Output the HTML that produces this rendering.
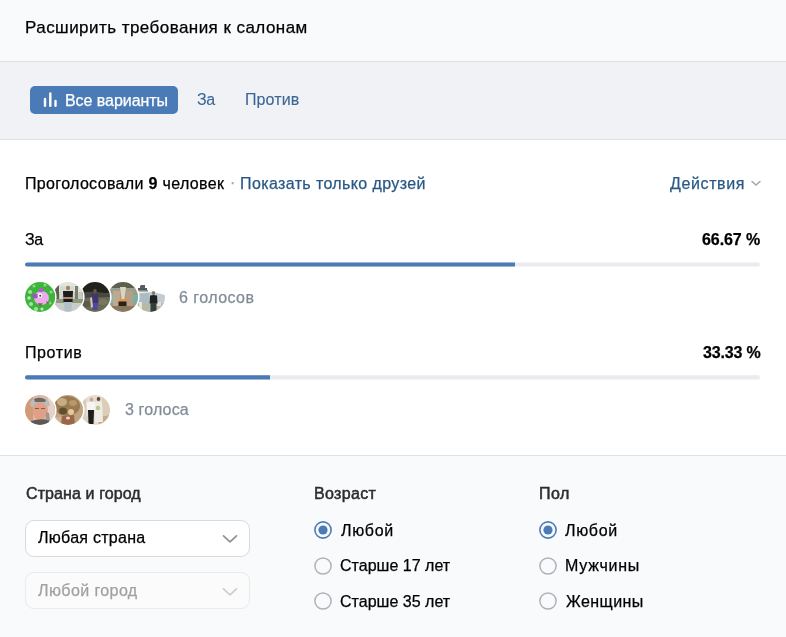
<!DOCTYPE html>
<html><head><meta charset="utf-8">
<style>
*{margin:0;padding:0;box-sizing:border-box}
html,body{width:786px;height:637px;overflow:hidden;background:#fff;font-family:"Liberation Sans",sans-serif;color:#000}
.t{position:absolute;white-space:nowrap;font-size:16px;line-height:20px;will-change:transform;-webkit-text-stroke:0.25px currentColor}
#hdr{position:absolute;left:0;top:0;width:786px;height:62px;background:#f9fafb;border-bottom:1px solid #dcdfe3}
#tabs{position:absolute;left:0;top:62px;width:786px;height:78px;background:#f0f2f5;border-bottom:1px solid #dde0e4}
#filt{position:absolute;left:0;top:455px;width:786px;height:182px;background:#f9fafb;border-top:1px solid #dfe1e5}
.btn{position:absolute;left:30px;top:86px;width:148px;height:28px;background:#4a7bb6;border-radius:5px}
.link{color:#2a5885}
.tab{color:#3a6595;-webkit-text-stroke:0.1px #3a6595}
.gray{color:#818c99}
.med{color:#2c2d2e;-webkit-text-stroke:0.5px #2c2d2e}
.track{position:absolute;left:25px;width:735px;height:4px;background:#e9ebee;border-radius:2px;overflow:hidden}
.fill{position:absolute;left:0;top:0;height:100%;background:#4a7bb6}
.av{position:absolute;width:30px;height:30px;border-radius:50%;box-shadow:0 0 0 1.6px #fff;overflow:hidden}
.av svg{display:block}
.sel{position:absolute;left:25px;width:225px;height:37px;border-radius:9px;background:#fff;border:1px solid #d8dadd}
.sel.dis{background:#fbfbfc;border-color:#e9eaec}
.chev{position:absolute}
.rad{position:absolute;width:18px;height:18px}
.rad svg{display:block}
.radio{position:absolute;width:18px;height:18px;border-radius:50%;border:1.6px solid #adb3ba;background:transparent}
.radio.on{border:1.7px solid #4f7db5}
.radio.on::after{content:"";position:absolute;left:2.8px;top:2.8px;width:9px;height:9px;border-radius:50%;background:#4a7bb6}
</style></head><body>
<div id="hdr"></div>
<div class="t" style="left:25px;top:17.7px;font-size:17px;letter-spacing:0.45px">Расширить требования к салонам</div>

<div id="tabs"></div>
<div class="btn"></div>
<svg style="position:absolute;left:43px;top:92px" width="15" height="16" viewBox="0 0 15 16">
  <rect x="0.8" y="5.8" width="2.4" height="9.2" rx="1.2" fill="#fff"/>
  <rect x="6.1" y="0.2" width="2.4" height="14.8" rx="1.2" fill="#fff"/>
  <rect x="11.3" y="7.7" width="2.4" height="7.3" rx="1.2" fill="#fff"/>
</svg>
<div class="t" style="left:65px;top:90.7px;color:#fff;letter-spacing:-0.05px">Все варианты</div>
<div class="t tab" style="left:197.2px;top:90.2px;letter-spacing:-0.5px">За</div>
<div class="t tab" style="left:245px;top:90.2px;letter-spacing:0.1px">Против</div>

<div class="t" style="left:25.2px;top:173.7px;letter-spacing:0.34px">Проголосовали <b>9</b> человек</div>
<div class="t gray" style="left:229.8px;top:172.8px;color:#a0a8b2">·</div>
<div class="t link" style="left:240px;top:173.7px;letter-spacing:0.38px">Показать только друзей</div>
<div class="t link" style="left:670px;top:173.7px;letter-spacing:0.62px">Действия</div>
<svg class="chev" style="left:750.5px;top:180px" width="10" height="7" viewBox="0 0 10 7"><path d="M1 1.5 L5 5 L9 1.5" fill="none" stroke="#99a2ad" stroke-width="1.4" stroke-linecap="round" stroke-linejoin="round"/></svg>

<div class="t" style="left:25.3px;top:230.2px;letter-spacing:-0.3px">За</div>
<div class="t" style="left:702px;top:230.0px;font-weight:bold;letter-spacing:-0.07px">66.67 %</div>
<svg style="position:absolute;left:0;top:250px" width="786" height="30"><rect x="25" y="12.4" width="735" height="4.2" rx="2.1" fill="#e9ebee"/><path d="M27.1 12.4 H515 V16.6 H27.1 A2.1 2.1 0 0 1 27.1 12.4 Z" fill="#4a7bb6"/></svg>

<svg width="0" height="0" style="position:absolute"><defs>
<filter id="bl" x="-10%" y="-10%" width="120%" height="120%"><feGaussianBlur stdDeviation="0.65"/></filter>
<filter id="bl2" x="-10%" y="-10%" width="120%" height="120%"><feGaussianBlur stdDeviation="1.2"/></filter>
</defs></svg>
<!-- row 1 -->
<div class="av" style="left:135px;top:282px;z-index:1;background:#fff"><svg width="30" height="30" viewBox="0 0 30 30"><g filter="url(#bl)">
<rect width="30" height="30" fill="#ffffff"/>
<path d="M0 11 L18 10 L30 13 L30 24 L0 24Z" fill="#c3ccd0"/>
<path d="M0 12 L14 11 L14 22 L0 22Z" fill="#aebbc2"/>
<rect x="5" y="3" width="5" height="3" fill="#55605f"/>
<rect x="3" y="6" width="9" height="2" fill="#4e5a58"/>
<rect x="2" y="8" width="11" height="1.6" fill="#7d8a88"/>
<path d="M0 22 L30 21 L28 30 L0 30Z" fill="#b8b8a6"/>
<rect x="4" y="20" width="3" height="8" fill="#e8e6da"/>
<rect x="20" y="20" width="6" height="4" fill="#e2e0d2"/>
<ellipse cx="18.5" cy="11" rx="1.7" ry="2" fill="#8c7868"/>
<path d="M15 13.5 Q18.5 12.5 22 13.5 L22.5 21.5 L14.5 21.5Z" fill="#1c2326"/>
<rect x="15.5" y="21" width="6" height="9" fill="#333c40"/>
</g></svg></div>
<div class="av" style="left:107.5px;top:282px;z-index:2"><svg width="30" height="30" viewBox="0 0 30 30"><g filter="url(#bl)">
<rect width="30" height="30" fill="#a89680"/>
<rect x="0" y="0" width="30" height="7" fill="#5d6150"/>
<path d="M2 6 L28 6 L26 10 L4 10Z" fill="#9aa08e"/>
<path d="M0 12 L7 12 L7 21 L0 21Z" fill="#7cb8b6"/>
<path d="M23 13 L30 13 L30 21 L23 21Z" fill="#6fb2ac"/>
<path d="M5 9 L12 9 L12 24 L5 24Z" fill="#bfa98e"/>
<path d="M18 9 L25 9 L25 24 L18 24Z" fill="#b59e84"/>
<path d="M12 5 L18 5 L16.5 17 L13.5 17Z" fill="#ddd4c0"/>
<rect x="11" y="17" width="7" height="2.5" fill="#e8924a"/>
<rect x="10.5" y="19.5" width="8" height="5" fill="#2c2014"/>
<rect x="0" y="24" width="30" height="6" fill="#8a7760"/>
</g></svg></div>
<div class="av" style="left:80px;top:282px;z-index:3"><svg width="30" height="30" viewBox="0 0 30 30"><g filter="url(#bl)">
<rect width="30" height="30" fill="#5a5a4c"/>
<rect x="0" y="0" width="30" height="11" fill="#22231f"/>
<path d="M0 11 Q12 8 30 12 L30 16 L0 16Z" fill="#474840"/>
<path d="M0 16 L30 15 L30 30 L0 30Z" fill="#6b6a58"/>
<ellipse cx="7" cy="22" rx="5" ry="3" fill="#5b5a4a"/>
<ellipse cx="23" cy="20" rx="5" ry="3" fill="#7a7864"/>
<ellipse cx="15" cy="9" rx="1.8" ry="2.1" fill="#6a584a"/>
<path d="M11.5 12 L18 12 L18.5 21 L11 21Z" fill="#3f3470"/>
<path d="M12 21 L18 21 L17.5 28 L12.5 28Z" fill="#4e4a9a"/>
<path d="M10 16 L12 15 L13 25 L11 26Z" fill="#d4c3b4"/>
</g></svg></div>
<div class="av" style="left:52.5px;top:282px;z-index:4"><svg width="30" height="30" viewBox="0 0 30 30"><g filter="url(#bl)">
<rect width="30" height="30" fill="#c4cbc0"/>
<rect x="0" y="0" width="30" height="10" fill="#e2e4de"/>
<rect x="7" y="4" width="14" height="14" fill="#d6dad2"/>
<rect x="1" y="2" width="5" height="19" fill="#59634a"/>
<rect x="22" y="4" width="3" height="16" fill="#7a8070"/>
<rect x="0" y="17" width="30" height="5" fill="#8f9a7c"/>
<rect x="0" y="21" width="30" height="9" fill="#c9ccc8"/>
<ellipse cx="15" cy="6" rx="2" ry="2.3" fill="#a27e64"/>
<path d="M10 9 L20 9 L19.5 20 L10.5 20Z" fill="#1b1b1c"/>
<path d="M9.5 15 L20.5 15 L20 17 L10 17Z" fill="#b08a70"/>
<path d="M11 20 L19 20 L18.5 30 L11.5 30Z" fill="#b4c0c8"/>
</g></svg></div>
<div class="av" style="left:25px;top:282px;z-index:5"><svg width="30" height="30" viewBox="0 0 30 30"><g filter="url(#bl)">
<rect width="30" height="30" fill="#3db53b"/>
<circle cx="5" cy="10" r="2" fill="#a6e0a0"/><circle cx="4" cy="16" r="1.8" fill="#b8e8c0"/><circle cx="6" cy="22" r="2" fill="#a6e0a0"/>
<circle cx="11" cy="27" r="2" fill="#a6e0a0"/><circle cx="17" cy="27" r="1.6" fill="#b8e8c0"/><circle cx="9" cy="4" r="1.5" fill="#8fd88a"/>
<circle cx="20" cy="3" r="1.5" fill="#8fd88a"/><circle cx="26" cy="10" r="1.5" fill="#8fd88a"/><circle cx="25" cy="21" r="1.5" fill="#8fd88a"/>
<ellipse cx="16.5" cy="16" rx="7.5" ry="7" fill="#eeaaee"/>
<ellipse cx="10" cy="14" rx="2.8" ry="2.4" fill="#9b58b8"/>
<ellipse cx="16" cy="8" rx="2.6" ry="2.2" fill="#a964c4"/>
<circle cx="15" cy="13.5" r="2.2" fill="#fff"/>
<circle cx="15.2" cy="13.8" r="1" fill="#333"/>
<path d="M13 21 L15 25 L18 21.5Z" fill="#7a6a5a"/>
<path d="M21 19 L25 21 L22 22Z" fill="#7a6a5a"/>
</g></svg></div>
<!-- row 2 -->
<div class="av" style="left:80px;top:395px;z-index:1"><svg width="30" height="30" viewBox="0 0 30 30"><g filter="url(#bl)">
<rect width="30" height="30" fill="#e6ddd0"/>
<rect x="0" y="0" width="6" height="30" fill="#d8cec0"/>
<rect x="22" y="0" width="8" height="30" fill="#dccdb6"/>
<path d="M0 22 L10 21 L10 30 L0 30Z" fill="#d8d2c6"/>
<path d="M20 22 L30 20 L30 30 L18 30Z" fill="#c9ab86"/>
<ellipse cx="11.5" cy="4.5" rx="1.8" ry="2" fill="#c9a88e"/>
<path d="M7 7 L15 7 L15 15 L7 15Z" fill="#f6f5f2"/>
<path d="M8 15 L14 15 L13.5 29 L8.5 29Z" fill="#1a1a1c"/>
<ellipse cx="18.5" cy="4" rx="1.8" ry="2" fill="#5a4a3c"/>
<path d="M15 7 L22 7 L23 27 L15 27Z" fill="#efece6"/>
<circle cx="18" cy="13" r="2.2" fill="#b6c88a"/>
</g></svg></div>
<div class="av" style="left:52.5px;top:395px;z-index:2"><svg width="30" height="30" viewBox="0 0 30 30"><g filter="url(#bl)">
<rect width="30" height="30" fill="#c0a482"/>
<ellipse cx="14" cy="11" rx="13" ry="10" fill="#9a7a50"/>
<ellipse cx="9" cy="7" rx="5" ry="4" fill="#c8ad84"/>
<ellipse cx="20" cy="8" rx="4" ry="3" fill="#b89868"/>
<ellipse cx="10" cy="16" rx="4" ry="3.5" fill="#5e5030"/>
<ellipse cx="18" cy="17" rx="3" ry="3" fill="#e6c8a0"/>
<path d="M9 21 L21 20 L22 30 L8 30Z" fill="#9a6848"/>
<ellipse cx="15" cy="23" rx="2" ry="1.5" fill="#f0d0c0"/>
<rect x="0" y="22" width="8" height="8" fill="#ceb494"/>
</g></svg></div>
<div class="av" style="left:25px;top:395px;z-index:3"><svg width="30" height="30" viewBox="0 0 30 30"><g filter="url(#bl)">
<rect width="30" height="30" fill="#e0b8a8"/>
<rect x="0" y="0" width="8" height="30" fill="#d29a78"/>
<rect x="23" y="0" width="7" height="30" fill="#e6d2c8"/>
<path d="M5 10 Q6 2 15 2.5 Q24 2 25 10 L23 12 L7 12Z" fill="#bdbcb8"/>
<path d="M9 4 Q15 1 21 5 L20 7 L10 7Z" fill="#6a6865"/>
<ellipse cx="15" cy="16" rx="7.5" ry="9" fill="#e0a088"/>
<path d="M10 13 L14 13 L14 14 L10 14Z" fill="#8a5a4a"/>
<path d="M16 13 L20 13 L20 14 L16 14Z" fill="#8a5a4a"/>
<path d="M6 26 Q15 23 24 25 L24 30 L6 30Z" fill="#5c5854"/>
<path d="M21 17 L24 18 L25 26 L21 25Z" fill="#9a9894"/>
</g></svg></div>

<div class="t gray" style="left:179.1px;top:287.7px;letter-spacing:0.45px">6 голосов</div>

<div class="t" style="left:25px;top:343.0px;letter-spacing:0.6px">Против</div>
<div class="t" style="left:702.7px;top:342.5px;font-weight:bold;letter-spacing:-0.18px">33.33 %</div>
<svg style="position:absolute;left:0;top:363px" width="786" height="30"><rect x="25" y="12.3" width="735" height="4.2" rx="2.1" fill="#e9ebee"/><path d="M27.1 12.3 H270 V16.5 H27.1 A2.1 2.1 0 0 1 27.1 12.3 Z" fill="#4a7bb6"/></svg>

<div class="t gray" style="left:124.6px;top:400.0px;letter-spacing:0.14px">3 голоса</div>

<div id="filt"></div>
<div class="t med" style="left:25.5px;top:483.9px;letter-spacing:0.1px">Страна и город</div>
<div class="t med" style="left:313.6px;top:483.9px;letter-spacing:0.33px">Возраст</div>
<div class="t med" style="left:539.2px;top:483.9px;letter-spacing:0.45px">Пол</div>

<div class="sel" style="top:520px"></div>
<div class="t" style="left:38.1px;top:528.0px;letter-spacing:0.28px">Любая страна</div>
<svg class="chev" style="left:222px;top:534px" width="16" height="10" viewBox="0 0 16 10"><path d="M1.5 1.8 L8 7.8 L14.5 1.8" fill="none" stroke="#8e9296" stroke-width="1.7" stroke-linecap="round" stroke-linejoin="round"/></svg>
<div class="sel dis" style="top:572px"></div>
<div class="t" style="left:38.1px;top:580.7px;letter-spacing:0.41px;color:#9fa1a4">Любой город</div>
<svg class="chev" style="left:222px;top:587px" width="16" height="10" viewBox="0 0 16 10"><path d="M1.5 1.8 L8 7.8 L14.5 1.8" fill="none" stroke="#cbcdd0" stroke-width="1.7" stroke-linecap="round" stroke-linejoin="round"/></svg>

<div class="rad" style="left:313.7px;top:520.8px"><svg width="18" height="18" viewBox="0 0 18 18"><circle cx="9" cy="9" r="8.1" fill="none" stroke="#4f7db5" stroke-width="1.6"/><circle cx="9" cy="9" r="4.6" fill="#4a7bb6"/></svg></div>
<div class="t" style="left:340.6px;top:520.8px;letter-spacing:0.67px">Любой</div>
<div class="rad" style="left:313.7px;top:556.5px"><svg width="18" height="18" viewBox="0 0 18 18"><circle cx="9" cy="9" r="8.1" fill="none" stroke="#aeb3b9" stroke-width="1.5"/></svg></div>
<div class="t" style="left:339.6px;top:555.6px;letter-spacing:0.02px">Старше 17 лет</div>
<div class="rad" style="left:313.7px;top:592.3px"><svg width="18" height="18" viewBox="0 0 18 18"><circle cx="9" cy="9" r="8.1" fill="none" stroke="#aeb3b9" stroke-width="1.5"/></svg></div>
<div class="t" style="left:339.6px;top:592.3px;letter-spacing:0.02px">Старше 35 лет</div>

<div class="rad" style="left:538.7px;top:520.8px"><svg width="18" height="18" viewBox="0 0 18 18"><circle cx="9" cy="9" r="8.1" fill="none" stroke="#4f7db5" stroke-width="1.6"/><circle cx="9" cy="9" r="4.6" fill="#4a7bb6"/></svg></div>
<div class="t" style="left:565.4px;top:520.8px;letter-spacing:0.67px">Любой</div>
<div class="rad" style="left:538.7px;top:556.5px"><svg width="18" height="18" viewBox="0 0 18 18"><circle cx="9" cy="9" r="8.1" fill="none" stroke="#aeb3b9" stroke-width="1.5"/></svg></div>
<div class="t" style="left:565.3px;top:555.6px;letter-spacing:0.75px">Мужчины</div>
<div class="rad" style="left:538.7px;top:592.3px"><svg width="18" height="18" viewBox="0 0 18 18"><circle cx="9" cy="9" r="8.1" fill="none" stroke="#aeb3b9" stroke-width="1.5"/></svg></div>
<div class="t" style="left:565.9px;top:592.3px;letter-spacing:0.42px">Женщины</div>
</body></html>
